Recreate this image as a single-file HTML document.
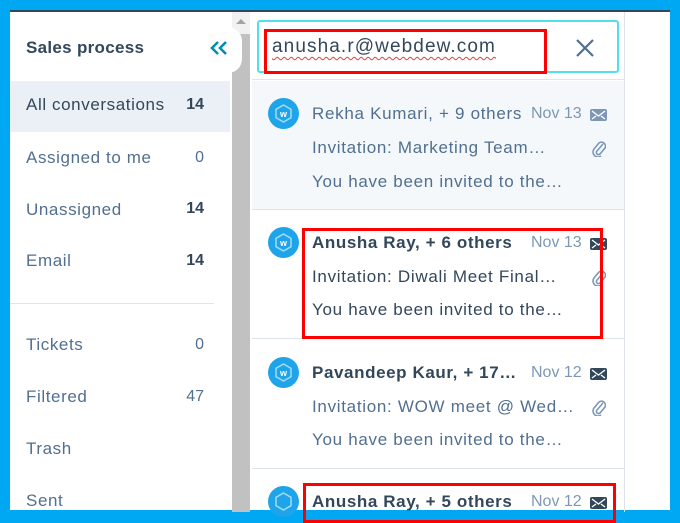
<!DOCTYPE html>
<html><head><meta charset="utf-8"><style>
*{margin:0;padding:0;box-sizing:border-box}
body{width:680px;height:519px;background:#00a8f3;position:relative;overflow:hidden;font-family:"Liberation Sans",sans-serif}
.a{position:absolute}
.side{left:10px;top:10px;width:222px;height:500px;background:#fff;border-top:2px solid #33475b}
.si{position:absolute;left:16px;font-size:17px;color:#516f90;letter-spacing:.6px;white-space:nowrap}
.cnt{position:absolute;right:28px;font-size:16px;color:#516f90}
.b{font-weight:bold;color:#33475b}
.main{left:232px;top:10px;width:438px;height:500px;background:#fff;border-top:2px solid #33475b}
.av{position:absolute;left:16px;width:31px;height:31px;border-radius:50%;background:#1fa4ea}
.av svg{position:absolute;left:6px;top:6px}
.t{position:absolute;left:60px;font-size:17px;color:#516f90;white-space:nowrap;letter-spacing:.7px}
.t.b{color:#33475b;letter-spacing:.6px}
.d{position:absolute;left:279px;font-size:16px;color:#7c98b6;white-space:nowrap}
.env{position:absolute;left:338px}
.clip{position:absolute;left:340px}
.red{position:absolute;border:3px solid #f00}
</style></head><body>
<div class="a side">
 <div class="si b" style="top:26px;letter-spacing:.3px">Sales process</div>
 <svg style="position:absolute;left:200px;top:29px" width="18" height="14" viewBox="0 0 18 14"><path d="M8 1L2 7l6 6M16 1l-6 6 6 6" fill="none" stroke="#0091ae" stroke-width="2.6"/></svg>
 <div style="position:absolute;left:0;top:69px;width:220px;height:51px;background:#eaf0f6"></div>
 <div class="si" style="top:83px;color:#33475b">All conversations</div><div class="cnt b" style="top:84px">14</div>
 <div class="si" style="top:136px">Assigned to me</div><div class="cnt" style="top:137px">0</div>
 <div class="si" style="top:188px">Unassigned</div><div class="cnt b" style="top:188px">14</div>
 <div class="si" style="top:239px">Email</div><div class="cnt b" style="top:240px">14</div>
 <div style="position:absolute;left:0;top:291px;width:204px;height:1px;background:#dfe3eb"></div>
 <div class="si" style="top:323px">Tickets</div><div class="cnt" style="top:324px">0</div>
 <div class="si" style="top:375px">Filtered</div><div class="cnt" style="top:376px">47</div>
 <div class="si" style="top:427px">Trash</div>
 <div class="si" style="top:479px">Sent</div>
</div>
<div class="a main">
 <div style="position:absolute;left:0;top:0;width:18px;height:500px;background:#c1c1c1"></div>
 <div style="position:absolute;left:0;top:0;width:18px;height:22px;background:#f1f1f1"></div>
 <div style="position:absolute;left:4px;top:7px;border:5px solid transparent;border-bottom-color:#a3a3a3;border-top:0"></div>
 <div style="position:absolute;left:-4px;top:15px;width:14px;height:46px;border-radius:0 23px 23px 0;background:#fff"></div>
 <div style="position:absolute;left:20px;top:0;width:372px;height:68px;border-bottom:1px solid #dfe3eb"></div>
 <div style="position:absolute;left:392px;top:0;width:1px;height:500px;background:#dfe3eb"></div>
 <div style="position:absolute;left:25px;top:8px;width:362px;height:53px;border:2px solid #4fe0eb;border-radius:3px"></div>
 <div style="position:absolute;left:40px;top:24px;font-size:19px;letter-spacing:1.1px;color:#33475b;text-decoration:underline wavy #e04040 1px;text-underline-offset:4px">anusha.r@webdew.com</div>
 <svg style="position:absolute;left:344px;top:27px" width="18" height="18" viewBox="0 0 18 18"><path d="M1 1L17 17M17 1L1 17" stroke="#516f90" stroke-width="2.2"/></svg>
 <div class="red" style="left:32px;top:17px;width:283px;height:45px"></div>

 <div style="position:absolute;left:20px;top:69px;width:372px;height:129px;background:#f5f8fa;border-bottom:1px solid #dfe3eb"></div>
 <div style="position:absolute;left:20px;top:198px;width:372px;height:129px;border-bottom:1px solid #dfe3eb"></div>
 <div style="position:absolute;left:20px;top:327px;width:372px;height:130px;border-bottom:1px solid #dfe3eb"></div>

 <div style="position:absolute;left:20px;top:0">
  <div class="av" style="top:86px"><svg width="19" height="19" viewBox="0 0 19 19"><polygon points="9.5,1 17,5.3 17,13.7 9.5,18 2,13.7 2,5.3" fill="none" stroke="#9fdcf8" stroke-width="1.5"/><text x="9.5" y="13" font-size="9" fill="#fff" text-anchor="middle" font-family="Liberation Sans" font-weight="bold">w</text></svg></div>
  <div class="t" style="top:92px">Rekha Kumari, + 9 others</div><div class="d" style="top:93px">Nov 13</div>
  <svg class="env" style="top:97px" width="17" height="12" viewBox="0 0 17 12"><rect width="17" height="12" rx="2" fill="#7c98b6"/><path d="M2 2l6.5 5 6.5-5M2 10l4-3M15 10l-4-3" stroke="#fff" stroke-width="1.3" fill="none"/></svg>
  <div class="t" style="top:126px">Invitation: Marketing Team…</div>
  <svg class="clip" style="top:127px" width="14" height="18" viewBox="0 0 14 18"><path d="M11 5L5 12a2 2 0 0 0 3 3l5-6a4 4 0 0 0-6-5L2 10a5 5 0 0 0 7 7" fill="none" stroke="#7c98b6" stroke-width="1.6"/></svg>
  <div class="t" style="top:160px">You have been invited to the…</div>

  <div class="av" style="top:215px"><svg width="19" height="19" viewBox="0 0 19 19"><polygon points="9.5,1 17,5.3 17,13.7 9.5,18 2,13.7 2,5.3" fill="none" stroke="#9fdcf8" stroke-width="1.5"/><text x="9.5" y="13" font-size="9" fill="#fff" text-anchor="middle" font-family="Liberation Sans" font-weight="bold">w</text></svg></div>
  <div class="t b" style="top:221px">Anusha Ray, + 6 others</div><div class="d" style="top:222px">Nov 13</div>
  <svg class="env" style="top:226px" width="17" height="12" viewBox="0 0 17 12"><rect width="17" height="12" rx="2" fill="#33475b"/><path d="M2 2l6.5 5 6.5-5M2 10l4-3M15 10l-4-3" stroke="#fff" stroke-width="1.3" fill="none"/></svg>
  <div class="t" style="top:255px;color:#33475b">Invitation: Diwali Meet Final…</div>
  <svg class="clip" style="top:256px" width="14" height="18" viewBox="0 0 14 18"><path d="M11 5L5 12a2 2 0 0 0 3 3l5-6a4 4 0 0 0-6-5L2 10a5 5 0 0 0 7 7" fill="none" stroke="#7c98b6" stroke-width="1.6"/></svg>
  <div class="t" style="top:288px;color:#33475b">You have been invited to the…</div>

  <div class="av" style="top:345px"><svg width="19" height="19" viewBox="0 0 19 19"><polygon points="9.5,1 17,5.3 17,13.7 9.5,18 2,13.7 2,5.3" fill="none" stroke="#9fdcf8" stroke-width="1.5"/><text x="9.5" y="13" font-size="9" fill="#fff" text-anchor="middle" font-family="Liberation Sans" font-weight="bold">w</text></svg></div>
  <div class="t b" style="top:351px">Pavandeep Kaur, + 17…</div><div class="d" style="top:352px">Nov 12</div>
  <svg class="env" style="top:356px" width="17" height="12" viewBox="0 0 17 12"><rect width="17" height="12" rx="2" fill="#33475b"/><path d="M2 2l6.5 5 6.5-5M2 10l4-3M15 10l-4-3" stroke="#fff" stroke-width="1.3" fill="none"/></svg>
  <div class="t" style="top:385px">Invitation: WOW meet @ Wed…</div>
  <svg class="clip" style="top:386px" width="14" height="18" viewBox="0 0 14 18"><path d="M11 5L5 12a2 2 0 0 0 3 3l5-6a4 4 0 0 0-6-5L2 10a5 5 0 0 0 7 7" fill="none" stroke="#7c98b6" stroke-width="1.6"/></svg>
  <div class="t" style="top:418px">You have been invited to the…</div>

  <div class="av" style="top:474px"><svg width="19" height="19" viewBox="0 0 19 19"><polygon points="9.5,1 17,5.3 17,13.7 9.5,18 2,13.7 2,5.3" fill="none" stroke="#9fdcf8" stroke-width="1.5"/></svg></div>
  <div class="t b" style="top:480px">Anusha Ray, + 5 others</div><div class="d" style="top:481px">Nov 12</div>
  <svg class="env" style="top:485px" width="17" height="12" viewBox="0 0 17 12"><rect width="17" height="12" rx="2" fill="#33475b"/><path d="M2 2l6.5 5 6.5-5M2 10l4-3M15 10l-4-3" stroke="#fff" stroke-width="1.3" fill="none"/></svg>
 </div>
 <div class="red" style="left:70px;top:216px;width:301px;height:111px"></div>
 <div class="red" style="left:71px;top:471px;width:313px;height:40px"></div>
</div>
</body></html>
